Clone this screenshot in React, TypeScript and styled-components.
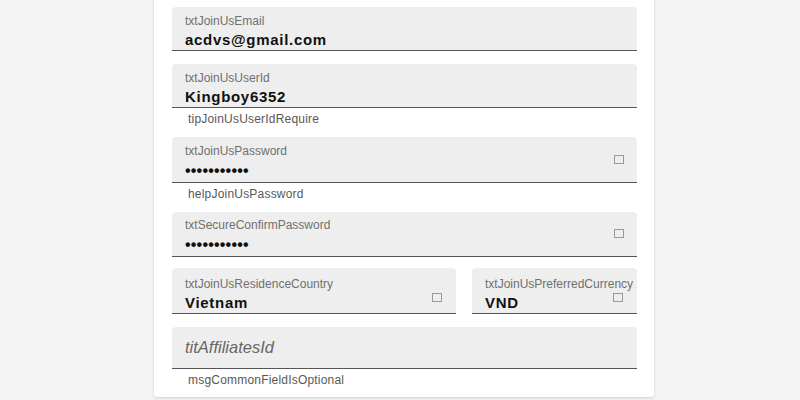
import styled, { createGlobalStyle } from 'styled-components'

const GlobalStyle = createGlobalStyle`
  html, body {
    margin: 0;
    padding: 0;
    background: #f3f3f3;
    font-family: 'Liberation Sans', Arial, sans-serif;
    overflow: hidden;
  }
`

const Page = styled.div`
  width: 800px;
  height: 400px;
  overflow: hidden;
`

const Card = styled.div`
  width: 500px;
  box-sizing: border-box;
  margin: -20px 0 0 154px;
  padding: 27px 17px 10px 18px;
  background: #fff;
  border-radius: 3px;
  box-shadow: 0 1px 3px rgba(0, 0, 0, 0.14);
  display: flex;
  flex-direction: column;
`

const Group = styled.div<{ $gap?: number }>`
  margin-bottom: ${p => p.$gap ?? 12}px;
`

const Box = styled.div<{ $h?: number }>`
  position: relative;
  height: ${p => p.$h ?? 44}px;
  box-sizing: border-box;
  display: flex;
  flex-direction: column;
  justify-content: flex-end;
  background: #eeeeee;
  border-radius: 4px 4px 0 0;
  border-bottom: 1px solid #555;
  padding: 0 13px 1px;
  overflow: hidden;
`

const Label = styled.div`
  font-size: 12px;
  line-height: 14px;
  color: #707070;
  white-space: nowrap;
`

const Value = styled.div<{ $dots?: boolean }>`
  margin-top: ${p => (p.$dots ? 4 : 3)}px;
  font-size: ${p => (p.$dots ? 16 : 15)}px;
  line-height: 18px;
  height: 18px;
  font-weight: bold;
  color: #111;
  letter-spacing: ${p => (p.$dots ? '0.2px' : '0.7px')};
  margin-bottom: ${p => (p.$dots ? 1 : 0)}px;
`

const Placeholder = styled.div`
  padding-bottom: 10px;
  font-size: 16.5px;
  line-height: 20px;
  font-style: italic;
  color: #666;
`

const Help = styled.div`
  height: 18px;
  box-sizing: border-box;
  padding: 5px 0 0 16px;
  font-size: 12px;
  line-height: 13px;
  color: #585858;
  letter-spacing: 0.2px;
`

const Glyph = styled.span<{ $top: number; $right: number }>`
  position: absolute;
  top: ${p => p.$top}px;
  right: ${p => p.$right}px;
  width: 8px;
  height: 7px;
  border: 1px solid #999;
`

const Row = styled.div`
  display: grid;
  grid-template-columns: 284px 165px;
  column-gap: 16px;
  margin-bottom: 13px;
`

const DOTS = '•••••••••••'

const App = () => (
  <>
    <GlobalStyle />
    <Page>
      <Card>
        <Group $gap={13}>
          <Box>
            <Label>txtJoinUsEmail</Label>
            <Value>acdvs@gmail.com</Value>
          </Box>
        </Group>

        <Group $gap={11}>
          <Box>
            <Label>txtJoinUsUserId</Label>
            <Value>Kingboy6352</Value>
          </Box>
          <Help>tipJoinUsUserIdRequire</Help>
        </Group>

        <Group $gap={11}>
          <Box $h={46}>
            <Label>txtJoinUsPassword</Label>
            <Value $dots>{DOTS}</Value>
            <Glyph $top={18} $right={13} />
          </Box>
          <Help>helpJoinUsPassword</Help>
        </Group>

        <Group $gap={11}>
          <Box $h={45}>
            <Label>txtSecureConfirmPassword</Label>
            <Value $dots>{DOTS}</Value>
            <Glyph $top={17} $right={13} />
          </Box>
        </Group>

        <Row>
          <Box $h={46}>
            <Label>txtJoinUsResidenceCountry</Label>
            <Value>Vietnam</Value>
            <Glyph $top={25} $right={14} />
          </Box>
          <Box $h={46}>
            <Label>txtJoinUsPreferredCurrency</Label>
            <Value>VND</Value>
            <Glyph $top={25} $right={14} />
          </Box>
        </Row>

        <Group $gap={0}>
          <Box $h={42}>
            <Placeholder>titAffiliatesId</Placeholder>
          </Box>
          <Help>msgCommonFieldIsOptional</Help>
        </Group>
      </Card>
    </Page>
  </>
)

export default App
